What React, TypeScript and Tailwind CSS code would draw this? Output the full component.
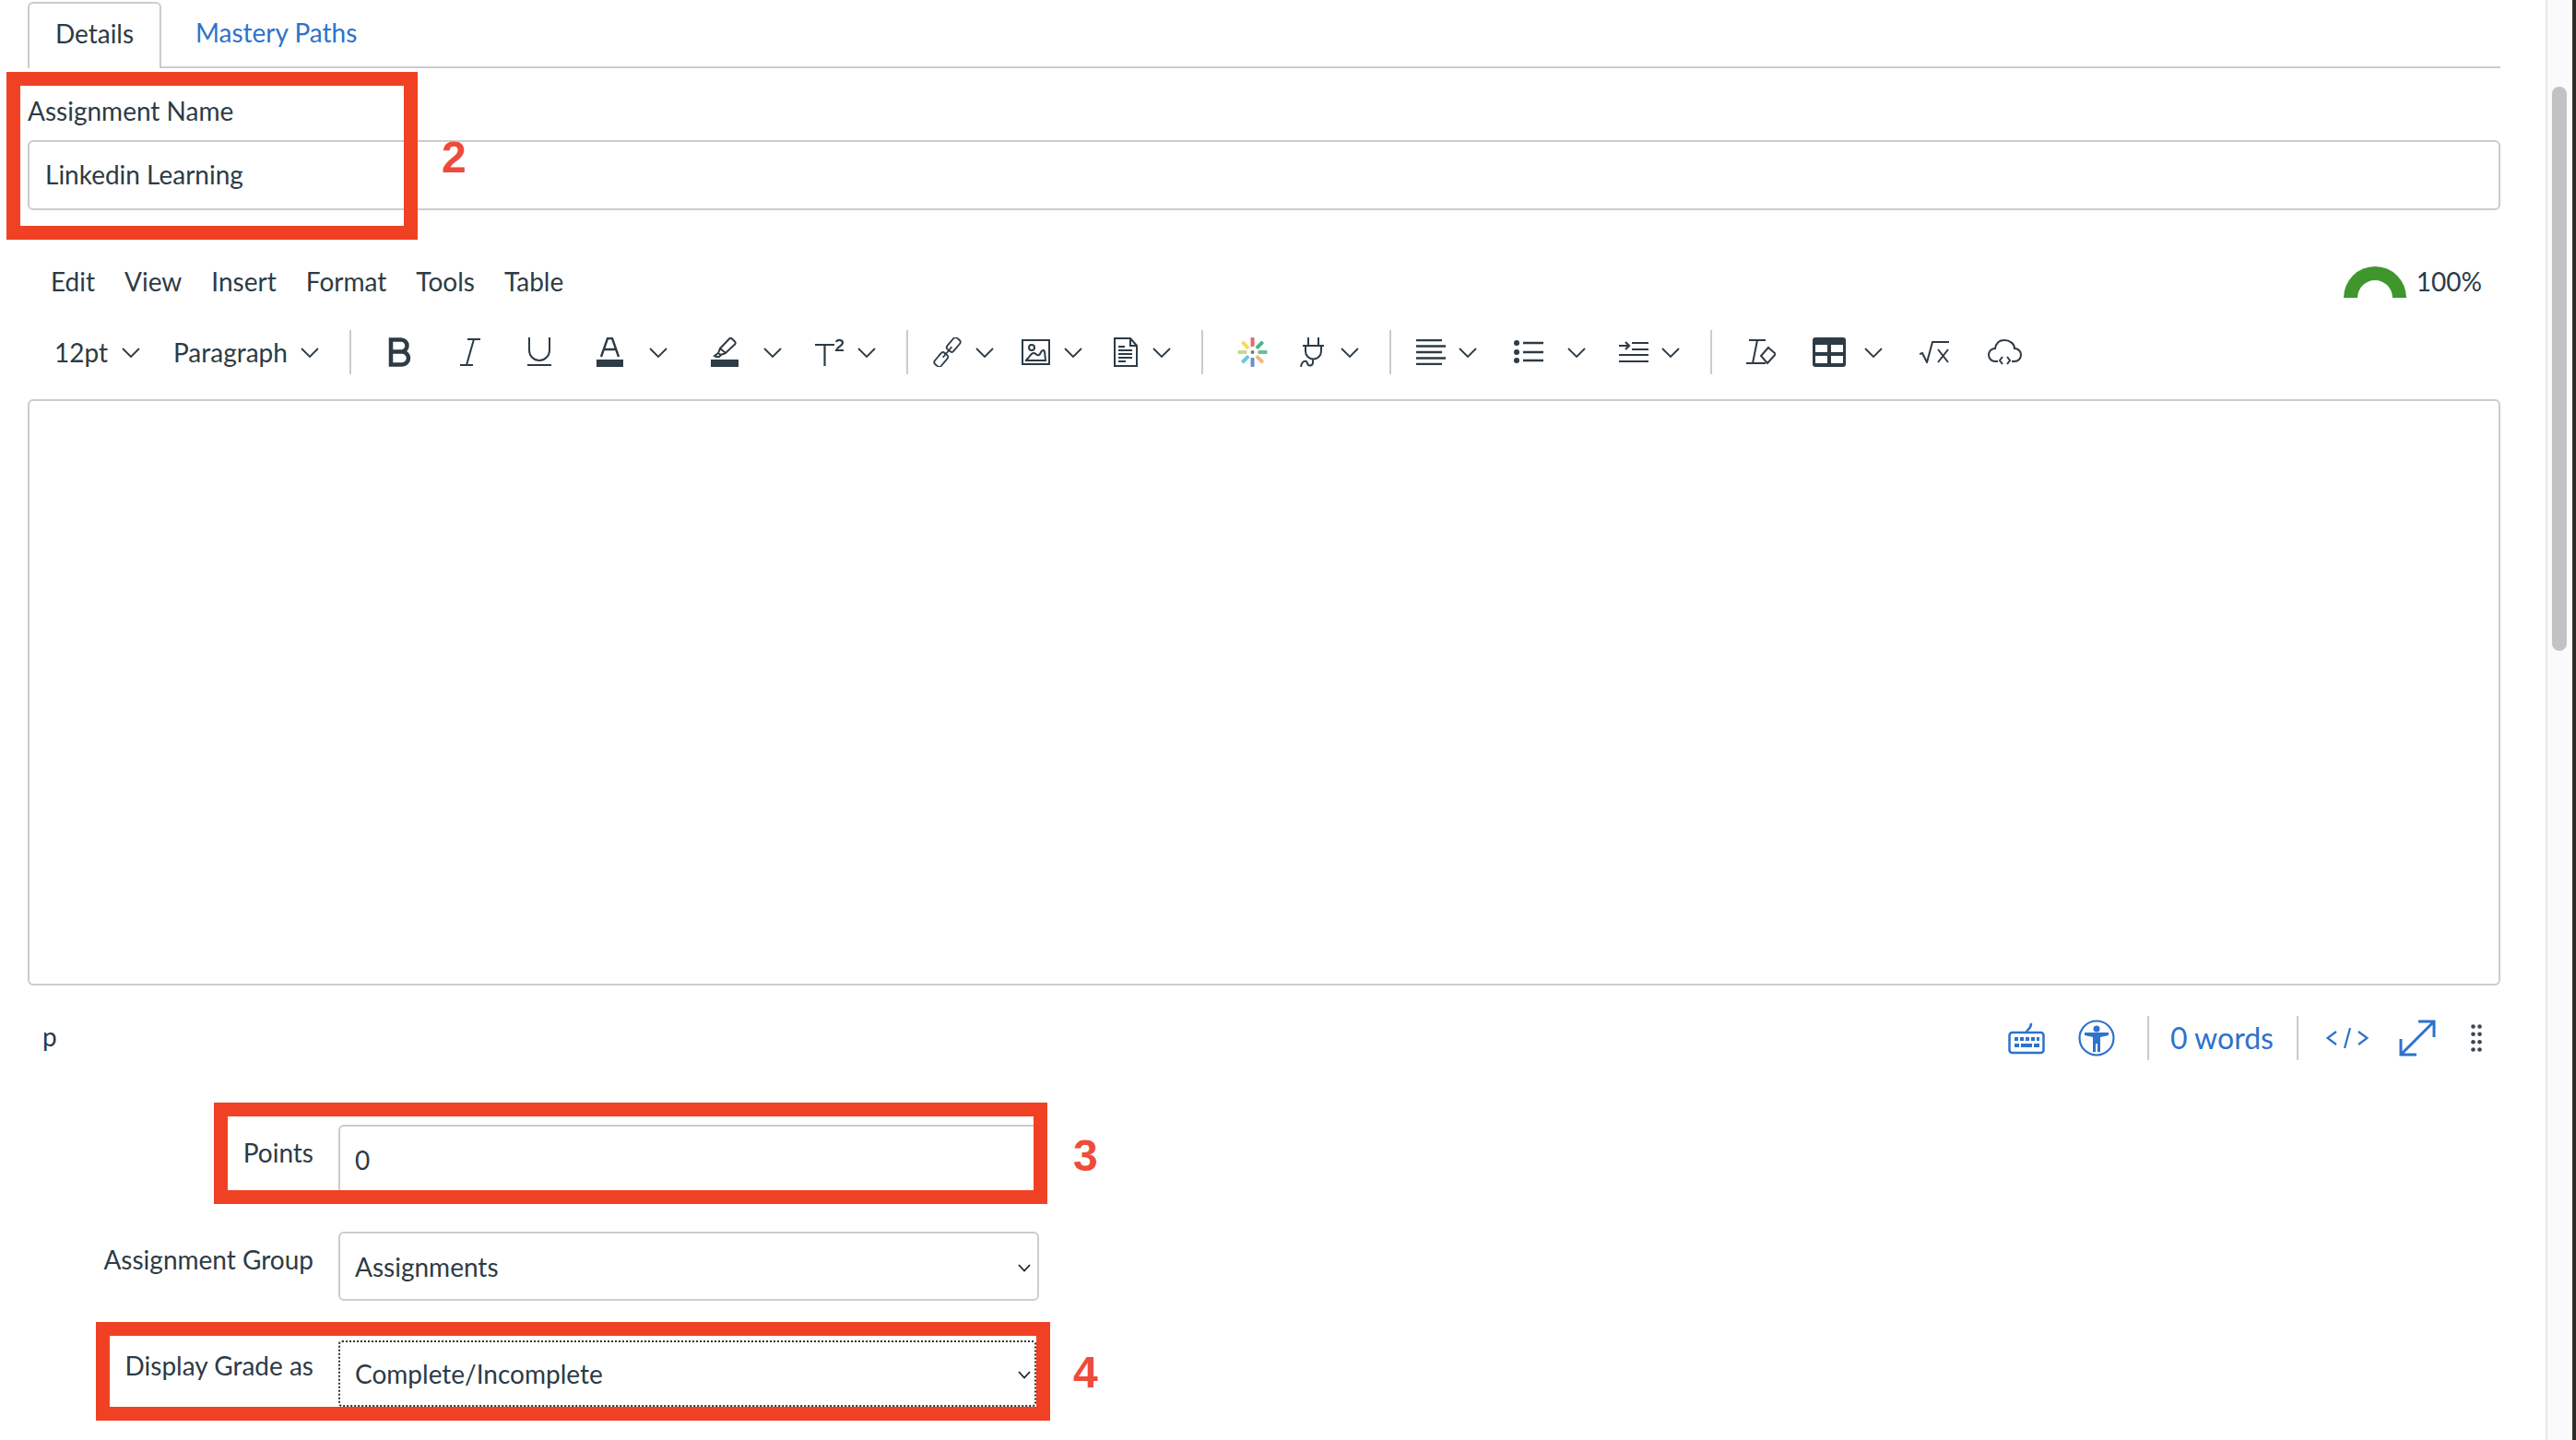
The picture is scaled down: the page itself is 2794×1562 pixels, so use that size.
import type { ReactNode } from "react";

const ink = "#2d3b45";
const blue = "#2d72cc";

const Chev = ({ className = "" }: { className?: string }) => (
  <svg width="20" height="11" viewBox="0 0 20 11" fill="none" stroke={ink} strokeWidth="1.8" className={`shrink-0 ${className}`}>
    <path d="M1 1l9 9 9-9" />
  </svg>
);

const Sep = ({ className = "" }: { className?: string }) => <div className={`w-[2px] h-[48px] shrink-0 bg-[#c7cdd1] ${className}`} />;

const Ico = ({ w, h, className = "", children }: { w: number; h: number; className?: string; children: ReactNode }) => (
  <svg width={w} height={h} viewBox={`0 0 ${w} ${h}`} fill="none" stroke={ink} strokeWidth="2" className={`shrink-0 ${className}`}>
    {children}
  </svg>
);

const petals = [
  { r: 0, c: "#e46a6a" },
  { r: 45, c: "#4cb58a" },
  { r: 90, c: "#6bbf8e" },
  { r: 135, c: "#f5b87a" },
  { r: 180, c: "#6a8fc9" },
  { r: 225, c: "#6ec6e0" },
  { r: 270, c: "#c7d98f" },
  { r: 315, c: "#f4dc5b" },
];

const Toolbar = () => (
  <div className="flex items-center h-[50px] mt-[30px] whitespace-nowrap">
    <span className="ml-[29px] w-[57px] shrink-0 pb-[1px]">12pt</span>
    <Chev className="ml-[16px]" />
    <span className="ml-[36px] w-[122px] shrink-0 pb-[1px]">Paragraph</span>
    <Chev className="ml-[16px]" />
    <Sep className="ml-[33px]" />
    <Ico w={25} h={32} className="ml-[40px]">
      <path strokeWidth="4.500" d="M3 2.500h11a6.500 6.500 0 0 1 0 13H3zM3 15.500h12a7 7 0 0 1 0 14H3z" />
    </Ico>
    <Ico w={22} h={32} className="ml-[53px]">
      <path d="M8 2h14M0 30h14M15 2L7 30" />
    </Ico>
    <Ico w={26} h={32} className="ml-[51px]">
      <path d="M2 0v14a11 11 0 0 0 22 0V0M0 30h26" />
    </Ico>
    <Ico w={29} h={32} className="ml-[49px]">
      <path strokeWidth="2.400" d="M5 21L12 1h5l7 20M8 13h13" />
      <rect x="0" y="24" width="29" height="8" fill={ink} stroke="none" />
    </Ico>
    <Chev className="ml-[28px]" />
    <Ico w={30} h={32} className="ml-[47px]">
      <path d="M20 1.500a2 2 0 0 1 3 0l3 3a2 2 0 0 1 0 3L16 17l-6-5zM10 12l-2 5 3 2 5-2M8 17l-4 3 2 1h3l2-2" />
      <rect x="0" y="24" width="30" height="8" fill={ink} stroke="none" />
    </Ico>
    <Chev className="ml-[27px]" />
    <Ico w={32} h={30} className="ml-[36px]">
      <path d="M0 7h21M10.500 7v23M23 4c1-3 7-3 7 1 0 3-6 4-7 8h8" strokeWidth="2.200" />
    </Ico>
    <Chev className="ml-[14px]" />
    <Sep className="ml-[33px]" />
    <Ico w={31} h={32} className="ml-[27px]">
      <g transform="rotate(-50 15.500 16)" strokeWidth="1.800">
        <rect x="-3" y="11.500" width="16" height="9" rx="3" />
        <rect x="18" y="11.500" width="16" height="9" rx="3" />
        <path d="M8 16h15" />
      </g>
    </Ico>
    <Chev className="ml-[15px]" />
    <Ico w={31} h={28} className="ml-[30px]">
      <rect x="1" y="1" width="29" height="26" />
      <circle cx="11" cy="9" r="3" />
      <path d="M4 23h23M5 22c4-1 4-7 8-7 3 0 3 3 6 2 2-1 2-6 5-5 2 1 1 7 2 10" />
    </Ico>
    <Chev className="ml-[15px]" />
    <Ico w={26} h={32} className="ml-[34px]">
      <path d="M1 1h17l7 8v22H1zM18 1v8h7M5 10h7M5 14h15M5 18h15M5 22h15M5 26h8" />
    </Ico>
    <Chev className="ml-[16px]" />
    <Sep className="ml-[33px]" />
    <svg width="33" height="32" viewBox="0 0 33 32" className="ml-[37px] shrink-0">
      {petals.map((p) => (
        <rect key={p.r} x="14.500" y="0" width="4" height="10" rx="1" fill={p.c} transform={`rotate(${p.r} 16.500 16)`} />
      ))}
      <circle cx="16.500" cy="16" r="2" fill="#777" />
    </svg>
    <Ico w={28} h={32} className="ml-[35px]">
      <path d="M9 0v9M20 0v9M3 9h23M6 9v6a8.500 8.500 0 0 0 17 0V9M14 24v3c0 4-5 5-6 1s-6-3-7 4" />
    </Ico>
    <Chev className="ml-[16px]" />
    <Sep className="ml-[33px]" />
    <Ico w={32} h={28} className="ml-[27px]">
      <path strokeWidth="2.400" d="M0 1h28M0 7.500h32M0 14h28M0 20.500h32M0 27h28" />
    </Ico>
    <Chev className="ml-[14px]" />
    <Ico w={32} h={28} className="ml-[40px]">
      <circle cx="3" cy="4" r="3" fill={ink} stroke="none" />
      <circle cx="3" cy="14" r="3" fill={ink} stroke="none" />
      <circle cx="3" cy="23" r="3" fill={ink} stroke="none" />
      <path strokeWidth="2.400" d="M10 4h22M10 14h22M10 23h22" />
    </Ico>
    <Chev className="ml-[26px]" />
    <Ico w={32} h={28} className="ml-[36px]">
      <path strokeWidth="2.200" d="M0 7h11M7 3l4 4-4 4M14 4h18M14 11h18M0 17h32M0 24h32" />
    </Ico>
    <Chev className="ml-[14px]" />
    <Sep className="ml-[33px]" />
    <Ico w={32} h={28} className="ml-[37px]">
      <path d="M3 1h18M12 1L7 26M0 26h21M24 9l8 7-9 10-7-8z" />
    </Ico>
    <svg width="36" height="32" viewBox="0 0 36 32" className="ml-[40px] shrink-0">
      <rect width="36" height="32" rx="3" fill={ink} />
      <path fill="#fff" d="M3 8h13v8H3zM20 8h13v8H20zM3 20h13v8H3zM20 20h13v8H20z" />
    </svg>
    <Chev className="ml-[20px]" />
    <Ico w={32} h={24} className="ml-[40px]">
      <path d="M0 14l3-1 5 10L14 1h18M20 9l11 14M31 9L20 23" />
    </Ico>
    <Ico w={37} h={28} className="ml-[42px]">
      <path d="M11 24H8c-4 0-7-3-7-7s3-7 7-7c1-6 5-9 10-9 6 0 11 4 11 9 4 0 7 3 7 7s-3 7-7 7h-3M16 19l-3 4 3 4M21 19l3 4-3 4" />
    </Ico>
  </div>
);

const StatusBar = () => (
  <div className="flex items-center h-[48px] mt-[33px]">
    <span className="ml-[16px] pb-[4px]">p</span>
    <div className="ml-auto mr-[20px] flex items-center text-[#2d72cc]">
      <svg width="40" height="36" viewBox="0 0 40 36" fill="none" stroke={blue} strokeWidth="2.500">
        <rect x="1.500" y="12" width="37" height="22" rx="3" />
        <path d="M20 12c0-4 5-3 5-10" />
        <path stroke="none" fill={blue} d="M7 17h4v4H7zM13 17h4v4h-4zM19 17h4v4h-4zM25 17h4v4h-4zM31 17h3v4h-3zM7 24h5v4H7zM14 24h12v4H14zM28 24h6v4h-6z" />
      </svg>
      <svg width="40" height="40" viewBox="0 0 40 40" className="ml-[36px]">
        <circle cx="20" cy="20" r="18.500" fill="none" stroke={blue} strokeWidth="2.200" />
        <circle cx="20" cy="10" r="3.500" fill={blue} />
        <path fill={blue} d="M7 14h26v3l-9 2v16h-3V26h-2v9h-3V19l-9-2z" />
      </svg>
      <Sep className="ml-[35px]" />
      <span className="ml-[23px] text-[32px] w-[111px] whitespace-nowrap">0 words</span>
      <Sep className="ml-[26px]" />
      <svg width="46" height="22" viewBox="0 0 46 22" fill="none" stroke={blue} strokeWidth="2.200" className="ml-[30px]">
        <path d="M11 4L1.500 11 11 18M26 0l-6 22M35 4l9.500 7L35 18" />
      </svg>
      <svg width="40" height="40" viewBox="0 0 40 40" fill="none" stroke={blue} strokeWidth="3" className="ml-[33px]">
        <path d="M2 38L38 2M21 2h17v17M2 21v17h17" />
      </svg>
      <svg width="12" height="30" viewBox="0 0 12 30" fill="#3d464d" className="ml-[38px]">
        <circle cx="2.500" cy="2.500" r="2.300" />
        <circle cx="9.500" cy="2.500" r="2.300" />
        <circle cx="2.500" cy="10.800" r="2.300" />
        <circle cx="9.500" cy="10.800" r="2.300" />
        <circle cx="2.500" cy="19.200" r="2.300" />
        <circle cx="9.500" cy="19.200" r="2.300" />
        <circle cx="2.500" cy="27.500" r="2.300" />
        <circle cx="9.500" cy="27.500" r="2.300" />
      </svg>
    </div>
  </div>
);

const SelectArrow = ({ className }: { className: string }) => (
  <svg width="14" height="9" viewBox="0 0 14 9" fill="none" stroke="#222" strokeWidth="1.800" className={`absolute top-1/2 -mt-[3px] ${className}`}>
    <path d="M1 1l6 6.500L13 1" />
  </svg>
);

const App = () => (
  <div className="relative w-[2794px] h-[1562px] overflow-hidden flex bg-white font-['Lato',sans-serif] text-[28px] leading-[34px] text-[#2d3b45]">
    <main className="w-[2761px] shrink-0 pl-[30px] pr-[49px]">
      <div className="flex h-[74px] border-b-2 border-[#c7cdd1]">
        <div className="mt-[2px] -mb-[2px] w-[145px] flex items-center justify-center bg-white border-2 border-b-0 border-[#c7cdd1] rounded-t-[6px] pb-[6px]">Details</div>
        <a className="ml-[37px] self-center pb-[3px] text-[#2d72cc]">Mastery Paths</a>
      </div>
      <label className="block mt-[29px] mb-[15px]">Assignment Name</label>
      <div className="h-[76px] flex items-center pl-[17px] pb-[2px] border-2 border-[#ccc] rounded-[6px]">Linkedin Learning</div>
      <div className="flex items-center h-[44px] mt-[55px] pl-[25px] gap-[32px]">
        <span>Edit</span>
        <span>View</span>
        <span>Insert</span>
        <span>Format</span>
        <span>Tools</span>
        <span>Table</span>
        <div className="ml-auto mr-[20px] flex items-center gap-[11px]">
          <svg width="68" height="35" viewBox="0 0 68 35">
            <path fill="#3f962c" d="M0 35a34 34 0 0 1 68 0H53a19 19 0 0 0-38 0z" />
          </svg>
          <span>100%</span>
        </div>
      </div>
      <Toolbar />
      <div className="h-[636px] mt-[26px] border-2 border-[#c7cdd1] rounded-[6px]" />
      <StatusBar />
      <div className="mt-[70px] flex gap-[27px]">
        <div className="w-[310px] pt-[13px] text-right">Points</div>
        <div className="w-[760px] h-[75px] flex items-center pl-[16px] border-2 border-[#ccc] rounded-[6px]">0</div>
      </div>
      <div className="mt-[41px] flex gap-[27px]">
        <div className="w-[310px] pt-[13px] text-right">Assignment Group</div>
        <div className="relative w-[760px] h-[75px] flex items-center pl-[16px] border-2 border-[#ccc] rounded-[6px]">
          Assignments
          <SelectArrow className="right-[7px]" />
        </div>
      </div>
      <div className="mt-[43px] flex gap-[27px]">
        <div className="w-[310px] pt-[10px] text-right">Display Grade as</div>
        <div className="relative w-[757px] h-[72px] flex items-center pl-[16px] border-2 border-dotted border-[#333] rounded-[4px]">
          Complete/Incomplete
          <SelectArrow className="right-[4px]" />
        </div>
      </div>
    </main>

    <div className="w-[29px] shrink-0 h-full bg-[#fafafa] border-l-2 border-[#e8e8e8] pl-[5px] pt-[94px]">
      <div className="w-[16px] h-[612px] rounded-full bg-[#c2c2c2]" />
    </div>
    <div className="flex-1 bg-[#2b2c26]" />

    <div className="absolute left-[7px] top-[78px] w-[446px] h-[182px] border-[15px] border-[#f04124]" />
    <div className="absolute left-[232px] top-[1196px] w-[904px] h-[110px] border-[15px] border-[#f04124]" />
    <div className="absolute left-[104px] top-[1434px] w-[1035px] h-[107px] border-[15px] border-[#f04124]" />
    <span className="absolute left-[479px] top-[147px] text-[48px] leading-[48px] font-bold font-['Liberation_Sans',sans-serif] text-[#ee4b3b]">2</span>
    <span className="absolute left-[1164px] top-[1230px] text-[48px] leading-[48px] font-bold font-['Liberation_Sans',sans-serif] text-[#ee4b3b]">3</span>
    <span className="absolute left-[1164px] top-[1465px] text-[48px] leading-[48px] font-bold font-['Liberation_Sans',sans-serif] text-[#ee4b3b]">4</span>
  </div>
);

export default App;
